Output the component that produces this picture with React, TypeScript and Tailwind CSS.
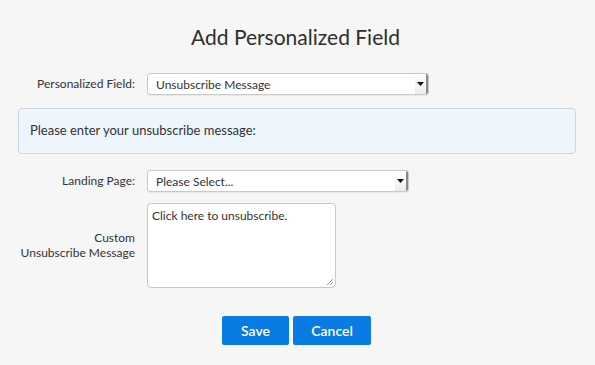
import React from "react";

const SelectBox = ({ value, width }: { value: string; width: string }) => (
  <div
    className={`${width} h-[22px] flex items-center justify-between bg-white border border-[#c9c9c9] rounded-[3px] shadow-[0_1px_1px_rgba(0,0,0,0.06)]`}
  >
    <span className="pl-[8px] pt-[2px] text-[12px] text-[#333]">{value}</span>
    <div className="h-full w-[13px] flex items-center justify-center border-r-2 border-[#8a8a8a] bg-gradient-to-b from-white to-[#ececec] rounded-r-[2px]">
      <svg width="7" height="4" viewBox="0 0 7 4">
        <path d="M0 0h7L3.5 4z" fill="#111" />
      </svg>
    </div>
  </div>
);

const App = () => {
  return (
    <div
      className="w-[595px] h-[365px] bg-[#f6f6f6] text-[#333] flex flex-col"
      style={{ fontFamily: "Lato, 'Open Sans', sans-serif" }}
    >
      <h1 className="text-center text-[21px] leading-none text-[#2f2f2f] mt-[26px] pr-[4px]">
        Add Personalized Field
      </h1>

      {/* Personalized field */}
      <div className="flex items-center mt-[26px]">
        <label className="w-[135px] text-right text-[12px]">Personalized Field:</label>
        <div className="ml-[12px]">
          <SelectBox value="Unsubscribe Message" width="w-[282px]" />
        </div>
      </div>

      {/* Info box */}
      <div className="mx-[18px] w-[558px] mt-[13px] h-[46px] flex items-center pl-[11px] bg-[#eef6fd] border border-[#cfd6dc] rounded-[4px] text-[13px]">
        Please enter your unsubscribe message:
      </div>

      {/* Landing page */}
      <div className="flex items-center mt-[16px]">
        <label className="w-[135px] text-right text-[12px]">Landing Page:</label>
        <div className="ml-[12px]">
          <SelectBox value="Please Select..." width="w-[262px]" />
        </div>
      </div>

      {/* Custom message */}
      <div className="flex items-start mt-[11px]">
        <label className="w-[135px] text-right text-[12px] leading-[15px] mt-[27px]">
          Custom
          <br />
          Unsubscribe Message
        </label>
        <div className="ml-[12px] relative w-[189px] h-[85px] bg-white border border-[#c9c9c9] rounded-[4px] px-[4px] pt-[3px] text-[12px]">
          Click here to unsubscribe.
          <svg className="absolute right-[1px] bottom-[1px]" width="9" height="9" viewBox="0 0 9 9">
            <path d="M8 2L2 8M8 5L5 8" stroke="#999" strokeWidth="1" />
          </svg>
        </div>
      </div>

      {/* Buttons */}
      <div className="flex justify-center gap-[4px] mt-[28px] pr-[2px]">
        <button className="w-[67px] h-[29px] bg-[#0a7be3] text-white text-[14px] font-semibold rounded-[2px]">
          Save
        </button>
        <button className="w-[78px] h-[29px] bg-[#0a7be3] text-white text-[14px] font-semibold rounded-[2px]">
          Cancel
        </button>
      </div>
    </div>
  );
};

export default App;
